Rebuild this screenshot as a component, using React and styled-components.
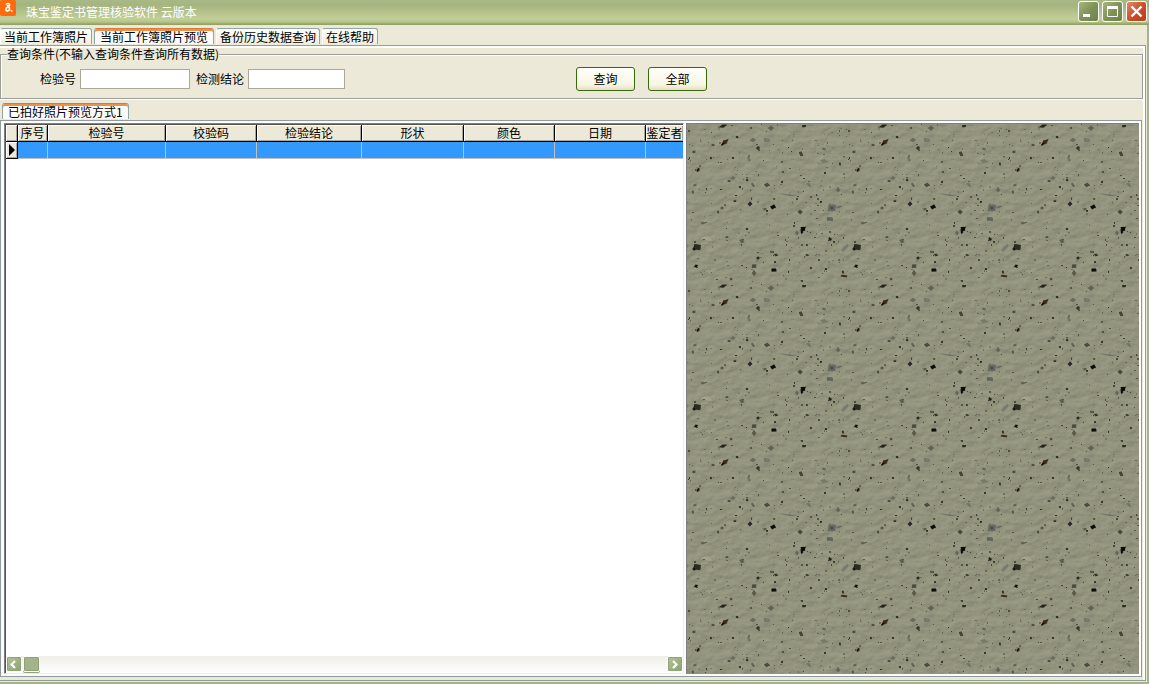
import React, { useState } from "react";
import styled, { createGlobalStyle } from "styled-components";

const TABS = ["当前工作簿照片", "当前工作簿照片预览", "备份历史数据查询", "在线帮助"];

const COLUMNS = [
  { name: "序号", width: 30 },
  { name: "检验号", width: 118 },
  { name: "校验码", width: 91 },
  { name: "检验结论", width: 105 },
  { name: "形状", width: 102 },
  { name: "颜色", width: 91 },
  { name: "日期", width: 91 },
  { name: "鉴定者" },
];

const TILE = 160;

// big chips of the stone tile: x, y, rx, ry, angle, color
const CHIPS = [
  [38, 18, 5, 1.9, -42, "#3d2a1c"],
  [36, 20, 2, 1, -42, "#17110b"],
  [36, 2, 4, 1.6, -15, "#25241a"],
  [10, 123, 4.6, 3.4, 10, "#2b2c20"],
  [7, 125, 1.8, 1.6, 0, "#191a12"],
  [86, 83, 2.8, 2.3, -30, "#0c0c08"],
  [63, 80, 2.2, 2.5, 0, "#2d2530"],
  [116, 105, 3, 2.4, 0, "#0a0b08"],
  [115, 108, 1.4, 2, 15, "#0f100b"],
  [87, 146, 3, 2, -5, "#0b0c09"],
  [9, 142, 2.2, 1.5, -20, "#15150f"],
  [157, 152, 4, 1.2, 10, "#3b2a16"],
  [156, 148, 1.2, 1.6, 0, "#2b220c"],
  [143, 115, 2, 1.6, 30, "#1c1d15"],
  [80, 61, 2.8, 2.2, 10, "#474b45"],
  [145, 84, 5, 4, 5, "#666b63"],
  [145, 84, 2.2, 1.7, 0, "#4c514d"],
  [143, 95, 3.6, 2.4, 0, "#5f645c"],
  [152, 83, 4, 1.2, -15, "#6b6f63"],
  [158, 124, 5.5, 1.8, -45, "#777a70"],
  [113, 88, 2.6, 2.2, 0, "#45483a"],
  [114, 30, 1.9, 3.2, -20, "#4a4238"],
  [71, 24, 1.9, 2.1, 0, "#33342b"],
  [62, 35, 1.5, 3.2, -25, "#6d7264"],
  [66, 16, 3.2, 2, -10, "#686c5e"],
  [80, 16, 3.8, 2.6, 0, "#777b6b"],
  [84, 4, 2.8, 2.6, 0, "#5e6356"],
  [117, 2, 2.4, 1.4, 0, "#292a20"],
  [50, 13, 1.6, 1.1, 0, "#171811"],
  [26, 21, 1.8, 1.4, 0, "#5b4c3d"],
  [11, 46, 1.5, 2.6, 25, "#281e16"],
  [7, 28, 2, 1.6, 0, "#4e5245"],
  [24, 34, 1.3, 1.3, 0, "#26261d"],
  [46, 34, 1.3, 1.3, 0, "#34342a"],
  [46, 54, 2.4, 2, 0, "#686b5e"],
  [42, 57, 1.8, 1.2, 15, "#45483c"],
  [60, 56, 1.2, 1.5, 0, "#2b2b20"],
  [66, 61, 1.2, 2.8, -30, "#5c6054"],
  [95, 58, 1, 1.5, 0, "#20221a"],
  [8, 61, 2.2, 1.2, -20, "#5d6254"],
  [6, 68, 1.2, 2.2, 0, "#55594c"],
  [48, 77, 1.6, 1.2, 0, "#3a2e24"],
  [78, 85, 1.8, 1.5, 0, "#55594d"],
  [35, 84, 1.8, 1.5, 0, "#535647"],
  [31, 88, 1.1, 1.6, 0, "#3b3d31"],
  [87, 75, 1.4, 1.1, 0, "#4d4638"],
  [16, 99, 2.6, 1.4, 0, "#606457"],
  [60, 105, 1.5, 1.3, 0, "#34362b"],
  [55, 117, 2.8, 2.2, 20, "#5d6153"],
  [40, 113, 1.7, 1.2, 0, "#4d5043"],
  [71, 134, 1.7, 1.8, 0, "#2e2920"],
  [67, 142, 3, 2.2, 0, "#4c5045"],
  [67, 149, 2.2, 2.8, 0, "#5c5949"],
  [85, 128, 2.4, 1.5, 0, "#54574a"],
  [89, 131, 2, 1.5, 20, "#34362c"],
  [120, 131, 1.6, 1.3, 0, "#3f4236"],
  [110, 109, 1.8, 2.2, 0, "#60645a"],
  [153, 40, 1.2, 2, 0, "#3e3e32"],
  [137, 37, 3.4, 2, 10, "#767a6b"],
  [137, 25, 2.6, 1.5, 20, "#686c5f"],
  [151, 66, 2.2, 2.2, 0, "#60655a"],
  [122, 61, 1.2, 3.2, -35, "#6d7162"],
  [102, 71, 8, 1, 8, "#73776a"],
  [134, 78, 1.2, 1.1, 0, "#272820"],
  [124, 144, 1.5, 1.2, 0, "#34352b"],
  [139, 145, 1.2, 1.2, 0, "#212118"],
  [132, 136, 1.1, 1.2, 0, "#2e2f24"],
  [44, 155, 1.6, 1.5, 0, "#4a4c3e"],
];

const LIGHTS = [
  [20, 115, 6, 2.4, 12, "#b8b29c"],
  [18, 119, 4, 1.3, 0, "#b0a592"],
  [78, 36, 6, 1.6, 5, "#a5a68e"],
  [96, 68, 7, 1.5, 10, "#a0a18a"],
  [52, 70, 6, 1.4, -20, "#9ea088"],
  [60, 99, 8, 1.8, 25, "#9c9e86"],
  [126, 14, 7, 2, -10, "#a1a28b"],
  [100, 120, 9, 2, 5, "#9b9d86"],
  [24, 146, 7, 1.6, -20, "#a0a189"],
  [130, 98, 6, 1.5, 20, "#9fa18a"],
];

// small grains, same pattern on every render
const makeGrains = count => {
  let seed = 7;
  const rand = () => {
    seed = (seed * 16807) % 2147483647;
    return seed / 2147483647;
  };
  const colors = ["#1f2018", "#44483a", "#5c6054", "#6c7061", "#403a34"];
  return Array.from({ length: count }, () => ({
    x: Math.floor(rand() * TILE),
    y: Math.floor(rand() * TILE),
    w: rand() > 0.65 ? 2 : 1,
    h: rand() > 0.75 ? 2 : 1,
    color: colors[Math.floor(rand() * colors.length)],
    opacity: 0.4 + rand() * 0.5,
  }));
};

const GRAINS = makeGrains(300);

// uneven outline of a chip
const EDGE = [1, 0.8, 1.15, 0.75, 1.1, 0.85, 1.2, 0.7];
const outline = (x, y, rx, ry, turn) =>
  EDGE.map((_, i) => {
    const r = EDGE[(i + turn) % EDGE.length];
    const a = (i * Math.PI) / 4;
    const px = x + Math.cos(a) * rx * r;
    const py = y + Math.sin(a) * ry * r;
    return `${px.toFixed(1)},${py.toFixed(1)}`;
  }).join(" ");

const Chips = ({ items }) =>
  items.map(([x, y, rx, ry, angle, color], i) => (
    <polygon
      key={i}
      points={outline(x, y, rx, ry, i)}
      fill={color}
      transform={`rotate(${angle} ${x} ${y})`}
    />
  ));

const StoneTexture = () => (
  <Stone aria-hidden="true">
    <defs>
      <filter id="rough" x="0" y="0" width="100%" height="100%">
        <feTurbulence
          type="fractalNoise"
          baseFrequency="0.08 0.12"
          numOctaves="5"
          seed="11"
          stitchTiles="stitch"
          result="noise"
        />
        <feDiffuseLighting
          in="noise"
          surfaceScale="1"
          lightingColor="#aaac92"
          colorInterpolationFilters="sRGB"
        >
          <feDistantLight azimuth="235" elevation="60" />
        </feDiffuseLighting>
      </filter>
      <pattern id="stone" width={TILE} height={TILE} patternUnits="userSpaceOnUse">
        <rect width={TILE} height={TILE} fill="#90927a" />
        <rect width={TILE} height={TILE} filter="url(#rough)" opacity="0.6" />
        <g opacity="0.5">
          <Chips items={LIGHTS} />
        </g>
        {GRAINS.map((g, i) => (
          <rect
            key={i}
            x={g.x}
            y={g.y}
            width={g.w}
            height={g.h}
            fill={g.color}
            opacity={g.opacity}
          />
        ))}
        <Chips items={CHIPS} />
        <g transform={`translate(-${TILE} 0)`}>
          <Chips items={CHIPS} />
        </g>
      </pattern>
    </defs>
    <rect width="100%" height="100%" fill="url(#stone)" />
  </Stone>
);

const Arrow = ({ left }) => (
  <svg width="13" height="13" viewBox="0 0 13 13">
    <path
      d={left ? "M8 3 4.5 6.5 8 10" : "M5 3 8.5 6.5 5 10"}
      fill="none"
      stroke="#fff"
      strokeWidth="2.2"
    />
  </svg>
);

const TitleBar = () => (
  <Bar>
    <svg width="16" height="16" viewBox="0 0 16 16">
      <rect width="16" height="16" rx="2" fill="#ff6a0a" />
      <path
        d="M6 4.6C6.5 3 9.8 3 9.6 5.2 9.4 6.6 6 7 5.8 9.2c0 2.2 3.4 2.2 3.7 0 .2-1.3-.3-2.6-2.7-3.6"
        fill="none"
        stroke="#fff"
        strokeWidth="1.6"
      />
      <path d="M10.8 10.2 12.4 11.6" stroke="#fff" strokeWidth="1.4" />
    </svg>
    <Title>珠宝鉴定书管理核验软件 云版本</Title>
    <WindowButton aria-label="最小化">
      <svg width="19" height="19" viewBox="0 0 19 19">
        <path d="M4 13.5h7" stroke="#fff" strokeWidth="3" />
      </svg>
    </WindowButton>
    <WindowButton aria-label="最大化">
      <svg width="19" height="19" viewBox="0 0 19 19">
        <path d="M4.5 5v9.5h10V5" fill="none" stroke="#fff" />
        <path d="M4 5.5h11" stroke="#fff" strokeWidth="3" />
      </svg>
    </WindowButton>
    <WindowButton aria-label="关闭" $close>
      <svg width="19" height="19" viewBox="0 0 19 19">
        <path d="m4.5 4.5 10 10m0-10-10 10" stroke="#fff" strokeWidth="2.4" />
      </svg>
    </WindowButton>
  </Bar>
);

const SearchForm = () => (
  <Group>
    <legend>查询条件(不输入查询条件查询所有数据)</legend>
    <Form onSubmit={e => e.preventDefault()}>
      <Field>
        检验号
        <Input type="text" $width={110} />
      </Field>
      <Field>
        检测结论
        <Input type="text" $width={97} />
      </Field>
      <Actions>
        <Button type="submit">查询</Button>
        <Button type="button">全部</Button>
      </Actions>
    </Form>
  </Group>
);

const ResultGrid = () => (
  <Grid>
    <Table>
      <colgroup>
        <Col $width={12} />
        {COLUMNS.map(c => (
          <Col key={c.name} $width={c.width} />
        ))}
      </colgroup>
      <thead>
        <tr>
          <Head />
          {COLUMNS.map(c => (
            <Head key={c.name} scope="col">
              {c.name}
            </Head>
          ))}
        </tr>
      </thead>
      <tbody>
        <tr>
          <Marker>
            <svg width="11" height="16" viewBox="0 0 11 16">
              <path d="M3 2v12l6-6z" fill="#000" />
            </svg>
          </Marker>
          {COLUMNS.map(c => (
            <Cell key={c.name} />
          ))}
        </tr>
      </tbody>
    </Table>
    <ScrollBar>
      <ScrollButton aria-label="向左">
        <Arrow left />
      </ScrollButton>
      <Thumb />
      <ScrollButton aria-label="向右">
        <Arrow />
      </ScrollButton>
    </ScrollBar>
  </Grid>
);

const App = () => {
  const [active, setActive] = useState(1);
  return (
    <>
      <GlobalStyle />
      <Window>
        <TitleBar />
        <Tabs role="tablist">
          {TABS.map((tab, i) => (
            <Tab
              key={tab}
              role="tab"
              aria-selected={i === active}
              $active={i === active}
              onClick={() => setActive(i)}
            >
              {tab}
            </Tab>
          ))}
        </Tabs>
        <Page>
          <SearchForm />
          <Tabs role="tablist" $inner>
            <Tab role="tab" aria-selected="true" $active>
              已拍好照片预览方式1
            </Tab>
          </Tabs>
          <Preview>
            <ResultGrid />
            <Photo>
              <StoneTexture />
            </Photo>
          </Preview>
        </Page>
      </Window>
    </>
  );
};

const GlobalStyle = createGlobalStyle`
  * {
    box-sizing: border-box;
  }
  body {
    margin: 0;
    background: #ece9d8;
  }
  body, button, input {
    font-family: "Noto Sans CJK SC", "Liberation Sans", sans-serif;
    font-size: 12px;
    line-height: 14px;
    color: #000;
  }
  svg {
    display: block;
  }
`;

const Window = styled.div`
  display: flex;
  flex-direction: column;
  min-height: 100vh;
  border-right: 2px solid #a4b67f;
  border-bottom: 2px solid #a4b67f;
`;

const Bar = styled.header`
  display: flex;
  align-items: flex-start;
  gap: 2px;
  height: 25px;
  margin-right: -2px;
  padding-right: 2px;
  background: linear-gradient(
    #a9b985 0,
    #a5b57f 5px,
    #b4c28c 12px,
    #c2cf98 19px,
    #b5c48a 22px,
    #93a667 24px,
    #8ea161 25px
  );
`;

const Title = styled.h1`
  flex: 1;
  margin: 5px 0 0 8px;
  font-size: 12px;
  font-weight: normal;
  line-height: 14px;
  color: #fff;
`;

const WindowButton = styled.button`
  width: 21px;
  height: 21px;
  margin-top: 1px;
  margin-left: 1px;
  padding: 0;
  border: 1px solid #fff;
  border-radius: 3px;
  background: ${({ $close }) =>
    $close
      ? "linear-gradient(135deg, #e08a6c, #cf4a26 55%, #b93c1b)"
      : "linear-gradient(135deg, #a5b57f, #7f9358 50%, #6c8246)"};
`;

const Tabs = styled.div`
  display: flex;
  align-items: flex-end;
  gap: 2px;
  padding: ${({ $inner }) => ($inner ? "4px 0 1px 2px" : "3px 0 1px")};
`;

const Tab = styled.button`
  height: 16px;
  padding: 0 ${({ $active }) => ($active ? 5 : 3)}px;
  border: 1px solid #91a7a0;
  border-bottom: 0;
  border-left-color: ${({ $active }) => ($active ? "#91a7a0" : "#fff")};
  border-top-color: ${({ $active }) => ($active ? "#d8793a" : "#91a7a0")};
  border-radius: 3px 3px 0 0;
  background: ${({ $active }) =>
    $active ? "#fcfcfe" : "linear-gradient(#fefefa, #f0eee0)"};
  box-shadow: ${({ $active }) => ($active ? "inset 0 2px #e8924a" : "none")};
  line-height: 15px;
  white-space: nowrap;
`;

const Page = styled.main`
  flex: 1;
  display: flex;
  flex-direction: column;
  margin: 0 1px 1px 0;
  padding: 2px 2px 3px 0;
  border: 1px solid #919b9c;
  border-left: 0;
  box-shadow: inset -2px 2px #fff;
`;

const Group = styled.fieldset`
  min-width: 0;
  margin: 0;
  padding: 0 6px 7px;
  border: 1px solid #9d9d99;
  box-shadow: inset 1px 1px #fff, 0 1px #fff;

  legend {
    padding: 0;
    background: #ece9d8;
    line-height: 12px;
  }
`;

const Form = styled.form`
  display: flex;
  align-items: center;
  gap: 6px;
  padding: 7px 0 0 33px;
`;

const Field = styled.label`
  display: flex;
  align-items: center;
  gap: 4px;
`;

const Input = styled.input`
  width: ${({ $width }) => $width}px;
  height: 20px;
  padding: 2px;
  border: 1px solid #aca899;
  background: #fff;
`;

const Actions = styled.div`
  display: flex;
  gap: 13px;
  margin-left: 225px;
`;

const Button = styled.button`
  width: 59px;
  height: 24px;
  padding: 0;
  border: 1px solid #376a0b;
  border-radius: 3px;
  background: linear-gradient(#fffffa, #f8f6e4 75%, #eadbc8);
`;

const Preview = styled.section`
  flex: 1;
  display: grid;
  grid-template-columns: 3fr 2fr;
  gap: 2px;
  margin-right: 1px;
  padding: 2px 2px 2px 3px;
  border: 1px solid #919b9c;
  background: #fcfcfe;
`;

const Grid = styled.div`
  display: flex;
  flex-direction: column;
  justify-content: space-between;
  min-width: 0;
  overflow: hidden;
  border: 1px solid #808080;
  border-right-color: #f1efe2;
  border-bottom-color: #f1efe2;
  box-shadow: inset 1px 1px #55534c;
  background: #fff;
  padding: 1px 0 0 1px;
`;

const Table = styled.table`
  width: 100%;
  table-layout: fixed;
  border-spacing: 0;
`;

const Col = styled.col`
  width: ${({ $width }) => ($width ? `${$width}px` : "auto")};
`;

const Head = styled.th`
  height: 17px;
  padding: 0;
  border-right: 1px solid #000;
  border-bottom: 1px solid #000;
  background: #ece9d8;
  box-shadow: inset 1px 1px #fff, inset -1px -1px #aca899;
  font-weight: normal;
  line-height: 16px;
  white-space: nowrap;

  &:last-child {
    border-right: 0;
  }
`;

const Marker = styled.td`
  height: 17px;
  padding: 0;
  border-right: 1px solid #000;
  border-bottom: 1px solid #000;
  background: #ece9d8;
  box-shadow: inset 1px 1px #fff, inset -1px -1px #aca899;
`;

const Cell = styled.td`
  padding: 0;
  border-right: 1px solid #c0c0c0;
  border-bottom: 1px solid #c0c0c0;
  background: #3399ff;

  &:last-child {
    border-right: 0;
  }
`;

const ScrollBar = styled.div`
  display: flex;
  gap: 1px;
  height: 17px;
  background: linear-gradient(#f0efe9, #fefefb);
`;

const ScrollButton = styled.button`
  width: 16px;
  height: 16px;
  padding: 0;
  border: 1px solid #fff;
  border-radius: 2px;
  background: linear-gradient(135deg, #b3c39a, #8ba26e);
  box-shadow: inset 0 0 0 1px #8ea277;

  &:last-child {
    margin-left: auto;
  }
`;

const Thumb = styled.div`
  width: 17px;
  height: 16px;
  border: 1px solid #fff;
  border-radius: 2px;
  background: #a2b488;
  box-shadow: inset 0 0 0 1px #8ea277, 0 1px #8ea277;
`;

const Photo = styled.div`
  display: flex;
  min-width: 0;
  border-top: 1px solid #808080;
  border-left: 1px solid #808080;
`;

const Stone = styled.svg`
  flex: 1;
  width: 100%;
  height: 100%;
`;

export default App;
